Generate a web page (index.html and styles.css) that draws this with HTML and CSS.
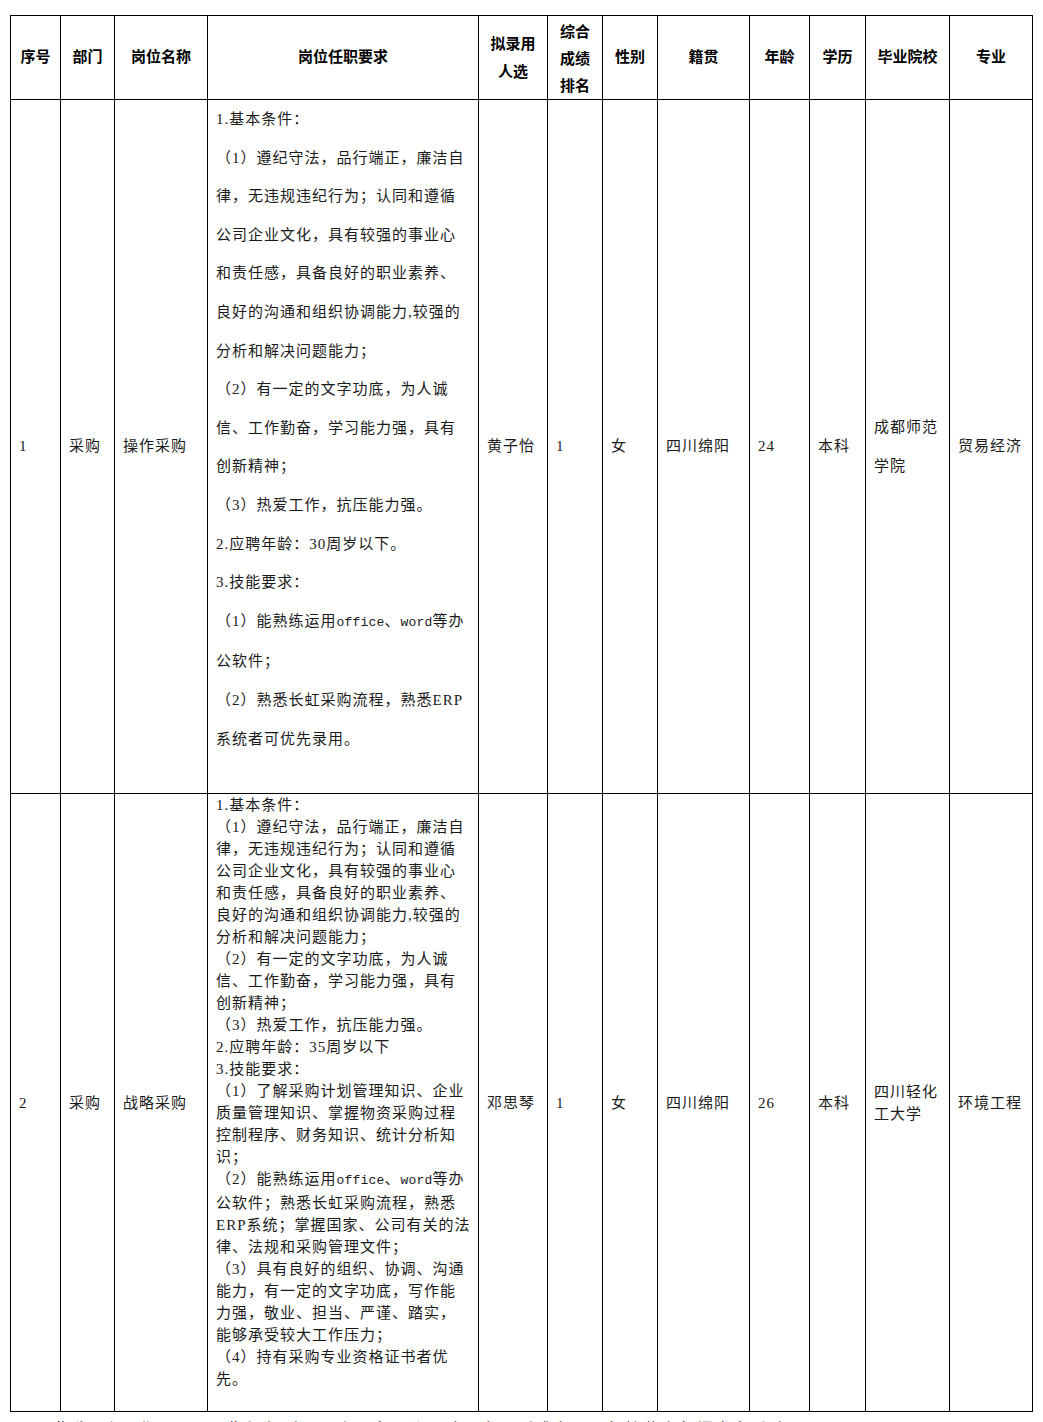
FILE: index.html
```html
<!DOCTYPE html>
<html lang="zh-CN">
<head>
<meta charset="utf-8">
<title>拟录用人选公示</title>
<link rel="stylesheet" href="styles.css">
</head>
<body>
<div class="page">
<table class="roster">
  <colgroup>
    <col class="c-no"><col class="c-dept"><col class="c-pos"><col class="c-req"><col class="c-name"><col class="c-rank"><col class="c-sex"><col class="c-home"><col class="c-age"><col class="c-edu"><col class="c-school"><col class="c-major">
  </colgroup>
  <thead>
    <tr class="head-row">
      <th>序号</th>
      <th>部门</th>
      <th>岗位名称</th>
      <th>岗位任职要求</th>
      <th class="two">拟录用<br>人选</th>
      <th class="three">综合<br>成绩<br>排名</th>
      <th>性别</th>
      <th>籍贯</th>
      <th>年龄</th>
      <th>学历</th>
      <th>毕业院校</th>
      <th>专业</th>
    </tr>
  </thead>
  <tbody>
    <tr class="row-a">
      <td>1</td>
      <td>采购</td>
      <td>操作采购</td>
      <td class="req">
        <div class="ln">1.基本条件：</div>
        <div class="ln">（1）遵纪守法，品行端正，廉洁自</div>
        <div class="ln">律，无违规违纪行为；认同和遵循</div>
        <div class="ln">公司企业文化，具有较强的事业心</div>
        <div class="ln">和责任感，具备良好的职业素养、</div>
        <div class="ln">良好的沟通和组织协调能力,较强的</div>
        <div class="ln">分析和解决问题能力；</div>
        <div class="ln">（2）有一定的文字功底，为人诚</div>
        <div class="ln">信、工作勤奋，学习能力强，具有</div>
        <div class="ln">创新精神；</div>
        <div class="ln">（3）热爱工作，抗压能力强。</div>
        <div class="ln">2.应聘年龄：30周岁以下。</div>
        <div class="ln">3.技能要求：</div>
        <div class="ln">（1）能熟练运用<span class="lat">office</span>、<span class="lat">word</span>等办</div>
        <div class="ln">公软件；</div>
        <div class="ln">（2）熟悉长虹采购流程，熟悉ERP</div>
        <div class="ln">系统者可优先录用。</div>
      </td>
      <td>黄子怡</td>
      <td>1</td>
      <td>女</td>
      <td>四川绵阳</td>
      <td>24</td>
      <td>本科</td>
      <td>成都师范<br>学院</td>
      <td>贸易经济</td>
    </tr>
    <tr class="row-b">
      <td>2</td>
      <td>采购</td>
      <td>战略采购</td>
      <td class="req">
        <div class="ln">1.基本条件：</div>
        <div class="ln">（1）遵纪守法，品行端正，廉洁自</div>
        <div class="ln">律，无违规违纪行为；认同和遵循</div>
        <div class="ln">公司企业文化，具有较强的事业心</div>
        <div class="ln">和责任感，具备良好的职业素养、</div>
        <div class="ln">良好的沟通和组织协调能力,较强的</div>
        <div class="ln">分析和解决问题能力；</div>
        <div class="ln">（2）有一定的文字功底，为人诚</div>
        <div class="ln">信、工作勤奋，学习能力强，具有</div>
        <div class="ln">创新精神；</div>
        <div class="ln">（3）热爱工作，抗压能力强。</div>
        <div class="ln">2.应聘年龄：35周岁以下</div>
        <div class="ln">3.技能要求：</div>
        <div class="ln">（1）了解采购计划管理知识、企业</div>
        <div class="ln">质量管理知识、掌握物资采购过程</div>
        <div class="ln">控制程序、财务知识、统计分析知</div>
        <div class="ln">识；</div>
        <div class="ln">（2）能熟练运用<span class="lat">office</span>、<span class="lat">word</span>等办</div>
        <div class="ln">公软件；熟悉长虹采购流程，熟悉</div>
        <div class="ln">ERP系统；掌握国家、公司有关的法</div>
        <div class="ln">律、法规和采购管理文件；</div>
        <div class="ln">（3）具有良好的组织、协调、沟通</div>
        <div class="ln">能力，有一定的文字功底，写作能</div>
        <div class="ln">力强，敬业、担当、严谨、踏实，</div>
        <div class="ln">能够承受较大工作压力；</div>
        <div class="ln">（4）持有采购专业资格证书者优</div>
        <div class="ln">先。</div>
      </td>
      <td>邓思琴</td>
      <td>1</td>
      <td>女</td>
      <td>四川绵阳</td>
      <td>26</td>
      <td>本科</td>
      <td>四川轻化<br>工大学</td>
      <td>环境工程</td>
    </tr>
  </tbody>
</table>
<p class="note">公示期为5个工作日，公示期间如对公示人员有异议，请以书面形式向公司纪检监察部门实名反映。</p>
</div>
</body>
</html>
```

FILE: styles.css
```css
body {
  margin: 0;
  background: #ffffff;
  color: #1a1a1a;
  font-family: "Liberation Serif", "Noto Sans CJK SC", serif;
}

.page {
  padding: 15px 0 0 10px;
}

.roster {
  border-collapse: collapse;
  table-layout: fixed;
  width: 1023px;
}

.c-no { width: 50px; }
.c-dept { width: 54px; }
.c-pos { width: 93px; }
.c-req { width: 271px; }
.c-name { width: 69px; }
.c-rank { width: 55px; }
.c-sex { width: 55px; }
.c-home { width: 92px; }
.c-age { width: 60px; }
.c-edu { width: 56px; }
.c-school { width: 84px; }
.c-major { width: 83px; }

.roster th,
.roster td {
  border: 1px solid #000000;
}

.roster th {
  padding: 0 0 3px;
  font-family: "Noto Sans CJK SC", sans-serif;
  font-weight: 700;
  font-size: 15px;
  line-height: 20px;
  color: #000000;
  text-align: center;
  vertical-align: middle;
}

.roster th.two {
  padding: 0 0 2px;
  line-height: 28px;
}

.roster th.three {
  padding: 0;
  line-height: 27px;
}

.head-row { height: 84px; }
.row-a { height: 694px; }
.row-b { height: 618px; }

.roster td {
  padding: 0 0 0 8px;
  font-size: 15px;
  letter-spacing: 1px;
  text-align: left;
  vertical-align: middle;
  white-space: nowrap;
}

.row-a td { line-height: 38.6px; }
.row-b td { line-height: 22px; }

.roster td.req {
  vertical-align: top;
  padding-top: 0;
}

.ln {
  white-space: nowrap;
}

.lat {
  font-family: "Liberation Mono", monospace;
  font-size: 13px;
  letter-spacing: 0.2px;
}

.note {
  margin: 4px 0 0 10px;
  font-family: "Noto Sans CJK SC", sans-serif;
  font-size: 16px;
  line-height: 24px;
  letter-spacing: 2px;
  color: #1a1a1a;
}
```
